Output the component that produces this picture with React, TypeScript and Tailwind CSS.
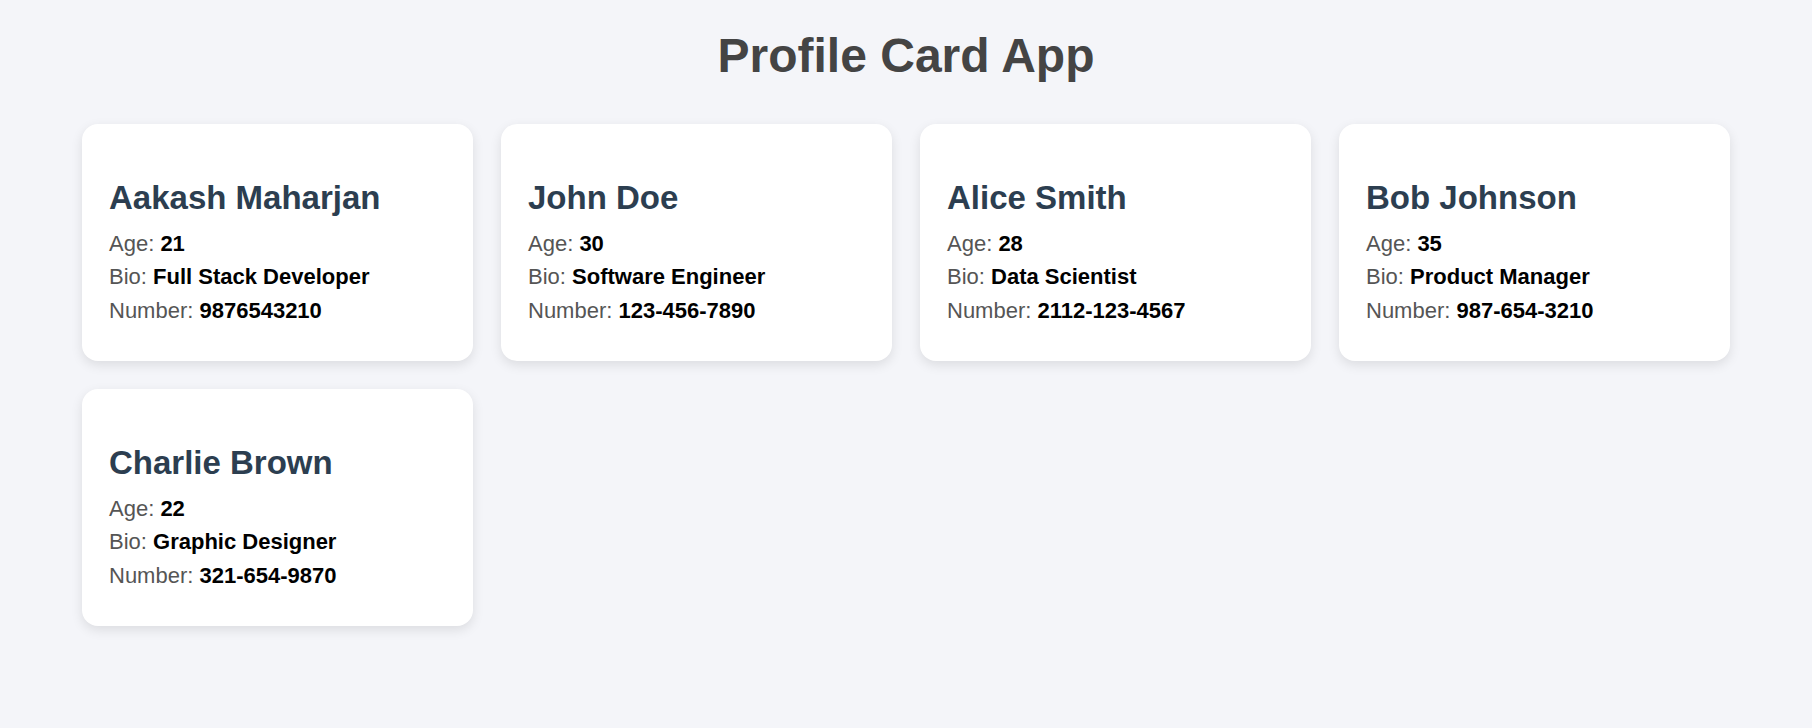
import React from "react";

type Profile = { name: string; age: number; bio: string; number: string };

const profiles: Profile[] = [
  { name: "Aakash Maharjan", age: 21, bio: "Full Stack Developer", number: "9876543210" },
  { name: "John Doe", age: 30, bio: "Software Engineer", number: "123-456-7890" },
  { name: "Alice Smith", age: 28, bio: "Data Scientist", number: "2112-123-4567" },
  { name: "Bob Johnson", age: 35, bio: "Product Manager", number: "987-654-3210" },
  { name: "Charlie Brown", age: 22, bio: "Graphic Designer", number: "321-654-9870" },
];

function Card({ p }: { p: Profile }) {
  return (
    <div className="bg-white rounded-[16px] shadow-[0_4px_12px_rgba(0,0,0,0.1)] pt-[54px] pb-[34px] px-[27px]">
      <h2 className="text-[33px] leading-[40px] font-bold text-[#2c3e50]">{p.name}</h2>
      <div className="mt-[9px] text-[22px] leading-[33.33px] text-[#555]">
        <p>
          Age: <strong className="font-bold text-black">{p.age}</strong>
        </p>
        <p>
          Bio: <strong className="font-bold text-black">{p.bio}</strong>
        </p>
        <p>
          Number: <strong className="font-bold text-black">{p.number}</strong>
        </p>
      </div>
    </div>
  );
}

export default function App() {
  return (
    <div
      className="min-h-[728px] bg-[#f4f5f9] pt-[28px]"
      style={{ fontFamily: '"Liberation Sans", Arial, sans-serif' }}
    >
      <h1 className="text-center text-[48px] leading-[56px] font-bold text-[#444]">Profile Card App</h1>
      <div className="mt-[40px] px-[82px] grid grid-cols-4 gap-[28px]">
        {profiles.map((p) => (
          <Card key={p.name} p={p} />
        ))}
      </div>
    </div>
  );
}
